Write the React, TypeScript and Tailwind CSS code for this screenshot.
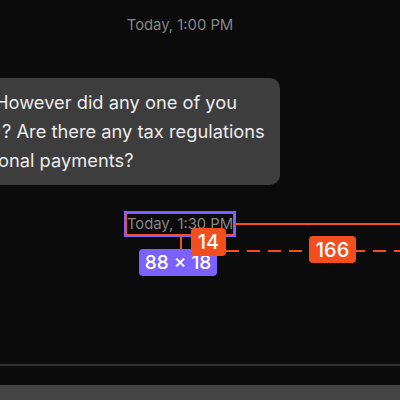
import React from "react";

export default function App() {
  const red = "bg-[#f24e1e]";
  return (
    <div className="relative w-[400px] h-[400px] overflow-hidden bg-[#0b0b0b] flex flex-col font-['Inter',sans-serif]">
      {/* first timestamp */}
      <div className="w-[360px] flex justify-center pt-[15px]">
        <div className="text-[14.8px] leading-[20px] text-[#858585]">Today, 1:00 PM</div>
      </div>

      {/* bubble */}
      <div className="mt-[43px] ml-[-20px] w-[300px] h-[107px] rounded-[10px] bg-[#3d3d3d] py-[10px] text-[18.3px] leading-[29px] text-[#ececec] whitespace-nowrap">
        <div className="ml-[15px]">However did any one of you</div>
        <div className="ml-[22px]">? Are there any tax regulations</div>
        <div className="ml-[18px]">onal payments?</div>
      </div>

      {/* second timestamp with inspector outlines */}
      <div className="w-[360px] flex justify-center mt-[29px]">
        <div className="relative text-[14.8px] leading-[20px] text-[#858585]">
          Today, 1:30 PM
          <div className="absolute -inset-x-[3px] -inset-y-[3px] border-2 border-[#7b61ff]" />
          <div className="absolute -inset-x-[1px] -inset-y-[1px] border border-[#f24e1e]" />
        </div>
      </div>

      <div className="flex-1" />
      <div className="h-[2px] bg-[#303030]" />
      <div className="h-[19px]" />
      <div className="h-[15px] bg-[#444444]" />

      {/* measurement overlays */}
      <div className={`absolute left-[234px] top-[223px] w-[166px] h-[2px] ${red}`} />
      <div className={`absolute left-[180px] top-[235px] w-[2px] h-[17px] ${red}`} />
      <div className={`absolute left-[180px] top-[250px] w-[14px] h-[2px] ${red}`} />
      <div className="absolute left-[226px] top-[250px] w-[174px] h-[2px] bg-[repeating-linear-gradient(to_right,#f24e1e_0px,#f24e1e_13px,transparent_13px,transparent_21px)]" />

      <div className="absolute left-[139px] top-[249px] w-[78px] h-[27px] rounded-[4px] bg-[#7b61ff] flex items-center justify-center text-white text-[19px] font-medium leading-none">
        88 × 18
      </div>
      <div className={`absolute left-[191px] top-[228px] w-[35px] h-[28px] rounded-[4px] ${red} flex items-center justify-center text-white text-[20px] font-medium leading-none`}>
        14
      </div>
      <div className={`absolute left-[309px] top-[236px] w-[47px] h-[27px] rounded-[4px] ${red} flex items-center justify-center text-white text-[20px] font-medium leading-none`}>
        166
      </div>
    </div>
  );
}
